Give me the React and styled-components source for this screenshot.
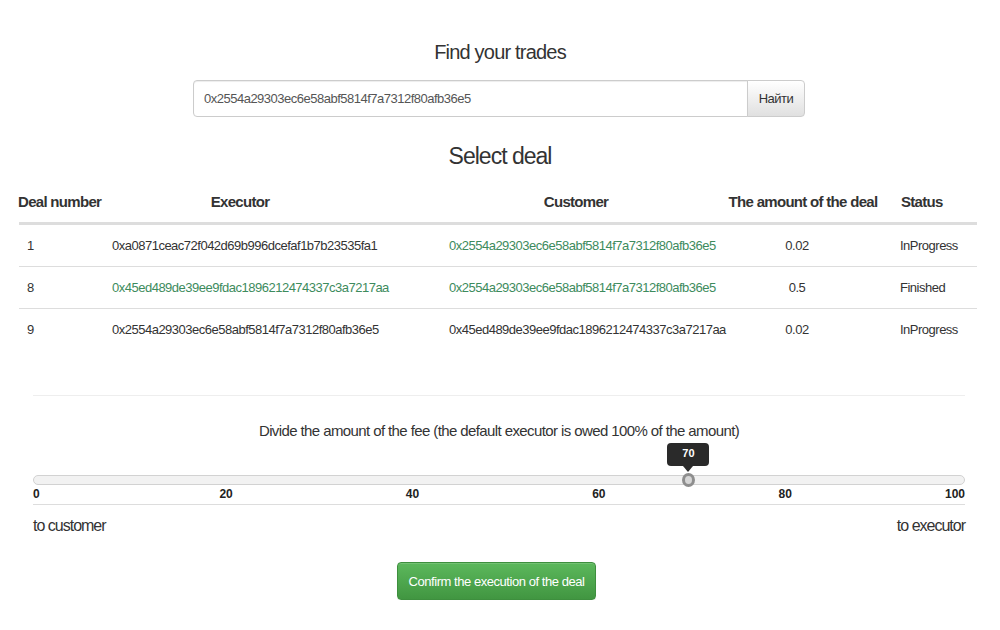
import React from 'react';
import styled, { createGlobalStyle } from 'styled-components';

const GlobalStyle = createGlobalStyle`
  body {
    margin: 0;
    background: #fff;
    color: #333;
    font-family: "Liberation Sans", Arial, sans-serif;
  }
`;

const Page = styled.div`
  width: 1000px;
  padding-top: 40px;
`;

const Title = styled.h3`
  margin: 0 0 16px;
  font-size: 20px;
  line-height: 24px;
  letter-spacing: -0.8px;
  font-weight: normal;
  text-align: center;
`;

const SearchGroup = styled.div`
  display: flex;
  width: 612px;
  height: 37px;
  margin: 0 0 24px 193px;
`;

const SearchInput = styled.input`
  flex: 1;
  box-sizing: border-box;
  height: 100%;
  padding: 0 10px;
  border: 1px solid #ccc;
  border-radius: 4px 0 0 4px;
  box-shadow: inset 0 1px 1px rgba(0, 0, 0, 0.075);
  font-family: inherit;
  font-size: 13px;
  letter-spacing: -0.5px;
  color: #555;
  outline: none;
`;

const SearchButton = styled.button`
  width: 58px;
  margin-left: -1px;
  border: 1px solid #ccc;
  border-radius: 0 4px 4px 0;
  background: linear-gradient(to bottom, #fff 0%, #e0e0e0 100%);
  font-family: inherit;
  font-size: 13px;
  letter-spacing: -0.5px;
  color: #333;
  cursor: pointer;
`;

const Subtitle = styled.h2`
  margin: 0 0 9px;
  font-size: 23px;
  line-height: 30px;
  letter-spacing: -1px;
  font-weight: normal;
  text-align: center;
`;

const Table = styled.div`
  width: 958px;
  margin-left: 19px;
`;

const Row = styled.div`
  display: grid;
  grid-template-columns: 85px 337px 280px 164px 92px;
  align-items: center;
  height: ${(p) => (p.$head ? '42px' : '41px')};
  border-bottom: ${(p) => (p.$head ? '2px solid #ddd' : 'none')};
  & + & {
    border-top: ${(p) => (p.$head ? 'none' : '1px solid #ddd')};
  }
`;

const HeadCell = styled.div`
  font-size: 15px;
  letter-spacing: -0.7px;
  font-weight: bold;
  text-align: ${(p) => p.$align || 'center'};
  padding-left: ${(p) => p.$pl || 0}px;
  padding-right: ${(p) => p.$pr || 0}px;
  margin-left: ${(p) => p.$ml || 0}px;
  white-space: nowrap;
`;

const Cell = styled.div`
  font-size: 13px;
  letter-spacing: -0.5px;
  white-space: nowrap;
  text-align: ${(p) => p.$align || 'left'};
  padding-left: ${(p) => (p.$pl === undefined ? 8 : p.$pl)}px;
  padding-right: ${(p) => p.$pr || 0}px;
  color: ${(p) => (p.$link ? '#3d8b5d' : '#333')};
`;

const FeeSection = styled.div`
  margin: 45px 35px 0 33px;
`;

const Divider = styled.hr`
  margin: 0;
  border: 0;
  border-top: 1px solid #eee;
`;

const FeeText = styled.p`
  margin: 25px 0 0;
  font-size: 15px;
  letter-spacing: -0.6px;
  line-height: 20px;
  text-align: center;
`;

const Slider = styled.div`
  position: relative;
  margin-top: 34px;
`;

const Track = styled.div`
  box-sizing: border-box;
  height: 10px;
  border: 1px solid #d2d2d2;
  border-radius: 5px;
  background: #f2f2f2;
`;

const Handle = styled.div`
  position: absolute;
  top: -2px;
  box-sizing: border-box;
  width: 13px;
  height: 14px;
  margin-left: -3px;
  border: 3px solid #8e8e8e;
  border-radius: 50%;
  background: #d6d6d6;
`;

const Bubble = styled.div`
  position: absolute;
  top: -32px;
  width: 42px;
  height: 23px;
  margin-left: -18px;
  border-radius: 4px;
  background: #2a2a2a;
  color: #fff;
  font-size: 11px;
  font-weight: bold;
  line-height: 21px;
  text-align: center;
  &::after {
    content: '';
    position: absolute;
    left: 50%;
    bottom: -6px;
    margin-left: -5px;
    border-left: 5px solid transparent;
    border-right: 5px solid transparent;
    border-top: 6px solid #2a2a2a;
  }
`;

const Scale = styled.div`
  position: relative;
  height: 19px;
  border-bottom: 1px solid #ddd;
`;

const Tick = styled.span`
  position: absolute;
  top: 1px;
  font-size: 12px;
  font-weight: bold;
  line-height: 17px;
  color: #222;
`;

const Ends = styled.div`
  display: flex;
  justify-content: space-between;
  margin-top: 11px;
  font-size: 16px;
  letter-spacing: -1px;
  line-height: 20px;
`;

const ConfirmButton = styled.button`
  display: block;
  width: 199px;
  height: 38px;
  margin: 26px 0 0 397px;
  padding: 0;
  border: 1px solid #3e8f3e;
  border-radius: 4px;
  background: linear-gradient(to bottom, #5cb85c 0%, #419641 100%);
  box-shadow: inset 0 1px 0 rgba(255, 255, 255, 0.15), 0 1px 1px rgba(0, 0, 0, 0.075);
  color: #fff;
  font-family: inherit;
  font-size: 13px;
  letter-spacing: -0.45px;
  white-space: nowrap;
  cursor: pointer;
`;

const deals = [
  {
    id: 1,
    executor: '0xa0871ceac72f042d69b996dcefaf1b7b23535fa1',
    customer: '0x2554a29303ec6e58abf5814f7a7312f80afb36e5',
    execLink: false,
    custLink: true,
    amount: '0.02',
    status: 'InProgress',
  },
  {
    id: 8,
    executor: '0x45ed489de39ee9fdac1896212474337c3a7217aa',
    customer: '0x2554a29303ec6e58abf5814f7a7312f80afb36e5',
    execLink: true,
    custLink: true,
    amount: '0.5',
    status: 'Finished',
  },
  {
    id: 9,
    executor: '0x2554a29303ec6e58abf5814f7a7312f80afb36e5',
    customer: '0x45ed489de39ee9fdac1896212474337c3a7217aa',
    execLink: false,
    custLink: false,
    amount: '0.02',
    status: 'InProgress',
  },
];

const ticks = [0, 20, 40, 60, 80, 100];

const App = () => {
  const fee = 70;

  return (
    <Page>
      <GlobalStyle />
      <Title>Find your trades</Title>
      <SearchGroup>
        <SearchInput defaultValue="0x2554a29303ec6e58abf5814f7a7312f80afb36e5" />
        <SearchButton type="button">Найти</SearchButton>
      </SearchGroup>

      <Subtitle>Select deal</Subtitle>
      <Table>
        <Row $head>
          <HeadCell $align="left" $ml={-1}>Deal number</HeadCell>
          <HeadCell $pr={65}>Executor</HeadCell>
          <HeadCell $pr={10}>Customer</HeadCell>
          <HeadCell>The amount of the deal</HeadCell>
          <HeadCell $align="left" $pl={16}>Status</HeadCell>
        </Row>
        {deals.map((d) => (
          <Row key={d.id}>
            <Cell>{d.id}</Cell>
            <Cell $link={d.execLink}>{d.executor}</Cell>
            <Cell $link={d.custLink}>{d.customer}</Cell>
            <Cell $align="center" $pl={0} $pr={12}>{d.amount}</Cell>
            <Cell $pl={15}>{d.status}</Cell>
          </Row>
        ))}
      </Table>

      <FeeSection>
        <Divider />
        <FeeText>Divide the amount of the fee (the default executor is owed 100% of the amount)</FeeText>
        <Slider>
          <Track />
          <Bubble style={{ left: `${fee}%` }}>{fee}</Bubble>
          <Handle style={{ left: `${fee}%` }} />
        </Slider>
        <Scale>
          {ticks.map((t) =>
            t === 100 ? (
              <Tick key={t} style={{ right: 0 }}>{t}</Tick>
            ) : (
              <Tick key={t} style={{ left: `${t}%` }}>{t}</Tick>
            )
          )}
        </Scale>
        <Ends>
          <span>to customer</span>
          <span>to executor</span>
        </Ends>
      </FeeSection>

      <ConfirmButton type="button">Confirm the execution of the deal</ConfirmButton>
    </Page>
  );
};

export default App;
